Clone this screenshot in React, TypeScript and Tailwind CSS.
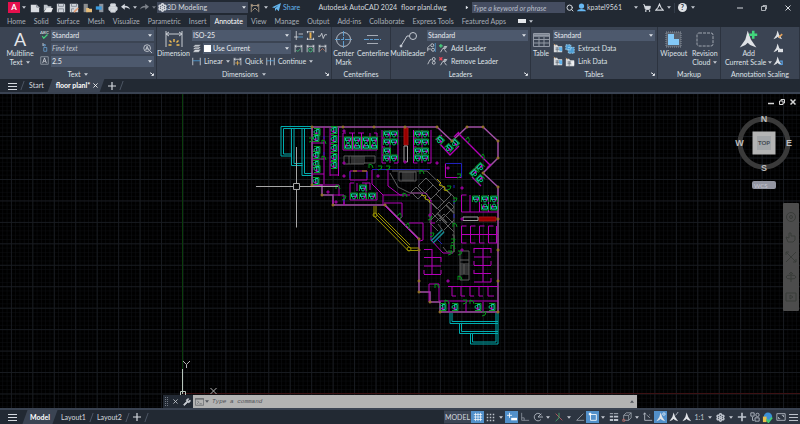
import type { ReactNode } from "react"
import { Printer, Search, Settings, ShoppingCart, Wrench } from "lucide-react"

const tabs = [
  "Home",
  "Solid",
  "Surface",
  "Mesh",
  "Visualize",
  "Parametric",
  "Insert",
  "Annotate",
  "View",
  "Manage",
  "Output",
  "Add-ins",
  "Collaborate",
  "Express Tools",
  "Featured Apps",
]

interface IconProps {
  children: ReactNode
  className?: string
  box?: number
}

function Icon({ children, className = "size-[10px]", box = 12 }: IconProps) {
  return (
    <svg
      viewBox={`0 0 ${box} ${box}`}
      className={`shrink-0 ${className}`}
      fill="none"
      stroke="currentColor"
      aria-hidden="true"
    >
      {children}
    </svg>
  )
}

function Caret({ className = "fill-[#c3c8d0]" }: { className?: string }) {
  return (
    <svg viewBox="0 0 6 4" className={`w-1 h-[3px] shrink-0 ${className}`} aria-hidden="true">
      <path d="M0 0h6L3 4z" />
    </svg>
  )
}

function IconButton({ label, children, className = "" }: { label: string; children: ReactNode; className?: string }) {
  return (
    <button aria-label={label} className={`flex items-center justify-center shrink-0 ${className}`}>
      {children}
    </button>
  )
}

function Combo({ label, value, className = "" }: { label: string; value: string; className?: string }) {
  return (
    <div className={`relative flex h-[11px] min-w-0 flex-1 ${className}`}>
      <select aria-label={label} className="w-full appearance-none bg-[#4d596d] pl-px pr-2 text-[#e6e9ee] outline-none">
        <option>{value}</option>
      </select>
      <Caret className="absolute right-[2px] top-1 fill-[#dfe3e9]" />
    </div>
  )
}

function Panel({ title, caret, launcher, children }: { title: string; caret?: boolean; launcher?: boolean; children: ReactNode }) {
  return (
    <section className="flex min-w-0 flex-col border-r border-[#2c333f]">
      <div className="flex flex-1 gap-1 pt-[3px]">{children}</div>
      <div className="relative flex h-[10px] items-center justify-center gap-1 whitespace-nowrap">
        {title}
        {caret && <Caret />}
        {launcher && (
          <Icon className="absolute right-[2px] top-[3px] size-1" box={4}>
            <path d="M0.5 0.5v1M1 1l2 2M3.5 1.5v2h-2" />
          </Icon>
        )}
      </div>
    </section>
  )
}

function BigButton({ icon, children, className = "" }: { icon: ReactNode; children: ReactNode; className?: string }) {
  return (
    <button className={`flex shrink-0 flex-col items-center whitespace-nowrap text-center leading-[9px] ${className}`}>
      <span className="flex h-[19px] items-center justify-center">{icon}</span>
      <span>{children}</span>
    </button>
  )
}

function TextButton({ icon, children }: { icon: ReactNode; children: ReactNode }) {
  return (
    <button className="flex h-[11px] items-center gap-[3px] whitespace-nowrap">
      {icon}
      {children}
    </button>
  )
}

/* Small dimension glyph: two extension lines with a bar between them */
function DimIcon({ children, className = "size-[10px]" }: { children?: ReactNode; className?: string }) {
  return (
    <Icon className={className}>
      <path d="M1.5 1v10M10.5 1v10M1.5 3h9" />
      <path d="M3.5 1.5L1.5 3l2 1.5M8.5 1.5l2 1.5-2 1.5" strokeWidth="0.8" />
      {children}
    </Icon>
  )
}

function LeaderIcon({ mark }: { mark?: string }) {
  return (
    <Icon className="size-[9px]">
      <path d="M2 11l3-5h2M7 5l4-2M7 7l3 4" />
      <circle cx="8" cy="4.5" r="1.5" />
      {mark === "add" && <path d="M2.5 0v5M0 2.5h5" stroke="#45d27c" strokeWidth="1.6" />}
      {mark === "remove" && <path d="M0.5 0.5l4 4M4.500 0.500l-4 4" stroke="#ef4757" strokeWidth="1.8" />}
    </Icon>
  )
}

function SheetIcon({ accent = "#62b4ed" }: { accent?: string }) {
  return (
    <Icon className="size-[10px]">
      <path d="M1 2h4l1 2h5v7H1z" fill="#d7dade" stroke="none" />
      <path d="M3 6h6M3 8h6M5 5v6" stroke="#59616d" strokeWidth="0.8" />
      <path d="M7 5h4v5H8z" fill={accent} stroke="none" />
      <path d="M1 1l2 2" stroke="#d99c5b" />
    </Icon>
  )
}

function ScaleIcon({ className = "size-[10px]", children }: { className?: string; children?: ReactNode }) {
  return (
    <Icon className={className}>
      <path d="M5.500 0.5L7.500 6 11 11 7 9.500 5.500 8 4 9.500 0.500 11 4 6z" fill="#dfe2e6" stroke="none" />
      {children}
    </Icon>
  )
}

function MenuLines({ className = "w-[9px] h-[8px]" }: { className?: string }) {
  return (
    <svg viewBox="0 0 9 8" className={className} stroke="currentColor" aria-hidden="true">
      <path d="M0 1.500h9M0 4.500h9M0 7.500h9" />
    </svg>
  )
}

function TitleBar() {
  return (
    <header className="flex h-[15px] shrink-0 items-center justify-between text-[#d5d9df]">
      <div className="flex items-center">
        <button aria-label="Application menu" className="ml-2 flex h-[11px] w-3 items-center justify-center bg-[#e5104d] text-[8px] font-bold text-white">
          A
        </button>
        <Caret className="ml-[2px] fill-[#c3c8d0]" />
        <div className="ml-1 flex items-center gap-[3px]">
          <IconButton label="New">
            <Icon><path d="M1 2h7l3 3v6H1z" fill="#d9dce1" stroke="none" /><path d="M8 2v3h3" stroke="#747b86" /></Icon>
          </IconButton>
          <IconButton label="Open">
            <Icon><path d="M1 10V2h4l1 2h4v2H4z" fill="#bfc4cb" stroke="none" /><path d="M1 11l3-5h8l-2 5z" fill="#e6e8eb" stroke="none" /></Icon>
          </IconButton>
          <IconButton label="Save">
            <Icon><path d="M1 1h9l1 1v9H1z" fill="#cfd3d9" stroke="none" /><path d="M3 1v3h6V1M3 11V7h6v4" stroke="#7c838e" /></Icon>
          </IconButton>
          <IconButton label="Save as">
            <Icon><path d="M1 1h9l1 1v9H1z" fill="#cfd3d9" stroke="none" /><path d="M3 1v3h6V1M3 11V7h3" stroke="#7c838e" /><path d="M6 11l5-5" stroke="#e29a70" strokeWidth="2" /></Icon>
          </IconButton>
          <IconButton label="Open from web">
            <Icon><path d="M2 1h5v10H2z" fill="#8c8e90" stroke="none" /><path d="M5 6h3l1 1h3v4H5z" fill="#e6bd7a" stroke="none" /></Icon>
          </IconButton>
          <IconButton label="Save to web">
            <Icon><path d="M5 1h5v10H5z" fill="#8d949e" stroke="none" /><path d="M1 4h7v4H1z" fill="#3c9bdd" stroke="none" /></Icon>
          </IconButton>
          <IconButton label="Plot">
            <Printer className="size-[10px]" fill="#d9dce1" stroke="#c3c8cf" />
          </IconButton>
          <IconButton label="Undo" className="gap-[3px]">
            <Icon className="size-[9px]"><path d="M0 5l5-4v2.5c4 0 6 1.500 7 5-2-2-4-2.500-7-2.500V9z" fill="currentColor" stroke="none" /></Icon>
            <Caret />
          </IconButton>
          <IconButton label="Redo" className="gap-[3px] opacity-50">
            <Icon className="size-[9px]"><path d="M12 5L7 1v2.500c-4 0-6 1.500-7 5 2-2 4-2.500 7-2.500V9z" fill="currentColor" stroke="none" /></Icon>
            <Caret />
          </IconButton>
        </div>
        <div className="relative ml-px flex h-[11px] w-[91px]">
          <select aria-label="Workspace" className="w-full appearance-none bg-[#414a5c] pl-[10px] text-[#d5d9df]">
            <option>3D Modeling</option>
          </select>
          <Settings className="absolute left-px top-px size-[9px]" strokeWidth={4} />
          <Caret className="absolute right-[2px] top-1 fill-[#dfe3e9]" />
        </div>
        <IconButton label="Drafting settings" className="ml-[2px] text-[#b9a58c]">
          <DimIcon><path d="M3 9l3-3 3 3" /></DimIcon>
        </IconButton>
        <IconButton label="Customize" className="ml-1"><Caret /></IconButton>
        <button className="ml-1 flex items-center gap-[2px] text-[#64b5ee]">
          <Icon className="size-[9px]"><path d="M0 5.500L12 0 9 11 6 8 4 11V7l5-4-6 3.500z" fill="currentColor" stroke="none" /></Icon>
          Share
        </button>
      </div>
      <h1 className="flex gap-1 whitespace-nowrap">
        <span>Autodesk AutoCAD 2024</span>
        <span>floor planl.dwg</span>
      </h1>
      <div className="flex items-center">
        <Caret className="mr-[3px] -rotate-90 fill-[#dfe3e9]" />
        <input
          aria-label="Search help"
          placeholder="Type a keyword or phrase"
          className="h-[11px] w-[93px] bg-[#454d61] pl-px italic placeholder:text-[#b9bfca]"
        />
        <IconButton label="Search" className="ml-px"><Search className="size-[8px]" strokeWidth={3} /></IconButton>
        <button className="ml-[3px] flex items-center gap-px">
          <Icon className="size-[9px]"><circle cx="6" cy="4" r="3.500" fill="#67b8f3" stroke="none" /><path d="M0 11c1-4 11-4 12 0z" fill="#67b8f3" stroke="none" /></Icon>
          kpatel9561
        </button>
        <IconButton label="Account menu" className="ml-[12px]"><Caret /></IconButton>
        <IconButton label="App store" className="ml-[5px]"><ShoppingCart className="size-[8px] fill-current" strokeWidth={3} /></IconButton>
        <IconButton label="Autodesk apps" className="ml-1 gap-[3px]">
          <Icon className="size-[9px]"><path d="M1 9.500h10L8 6 6 1.500 4 6z" strokeWidth="1.500" /></Icon>
          <Caret />
        </IconButton>
        <span className="mx-[3px] h-[10px] w-px bg-[#343d4a]" />
        <IconButton label="Help" className="gap-1">
          <span className="flex size-[9px] items-center justify-center rounded-full bg-[#dfe2e6] text-[7px] font-bold text-[#222933]">?</span>
          <Caret />
        </IconButton>
        <div className="ml-[42px] mr-[9px] flex items-center gap-[18px]">
          <IconButton label="Minimize"><Icon className="size-[6px]"><path d="M0 6h12" strokeWidth="2" /></Icon></IconButton>
          <IconButton label="Restore"><Icon className="size-[6px]"><path d="M1 3h8v8H1zM4 3V1h7v7H9" strokeWidth="1.500" /></Icon></IconButton>
          <IconButton label="Close"><Icon className="size-[6px]"><path d="M1 1l10 10M11 1L1 11" strokeWidth="2" /></Icon></IconButton>
        </div>
      </div>
    </header>
  )
}

function RibbonTabs() {
  return (
    <nav className="flex h-3 shrink-0 items-stretch pl-[3px] text-[#a9afb8]">
      {tabs.map((tab) => (
        <button
          key={tab}
          className={
            tab === "Annotate"
              ? "whitespace-nowrap bg-[#3b4453] px-1 text-white"
              : "whitespace-nowrap px-1"
          }
        >
          {tab}
        </button>
      ))}
      <IconButton label="Ribbon display" className="ml-2 gap-[3px]">
        <span className="h-1 w-2 bg-[#e6e8eb]" />
        <Caret />
      </IconButton>
    </nav>
  )
}

function Ribbon() {
  return (
    <div className="grid h-[52px] shrink-0 grid-cols-[157fr_175fr_59fr_140fr_127fr_63fr_79fr] bg-[#3b4453] text-[#dfe2e7]">
      <Panel title="Text" caret launcher>
        <BigButton className="w-9 pl-1" icon={<span className="text-[18px] leading-[17px] text-[#e3e5e9]">A</span>}>
          <span className="block">Multiline</span>
          <span className="flex items-center justify-center gap-1">Text <Caret /></span>
        </BigButton>
        <div className="mr-[2px] flex flex-1 flex-col gap-[2px]">
          <div className="flex gap-[2px]">
            <Icon className="size-[9px]"><text x="0" y="5" fontSize="6" fill="currentColor" stroke="none">ABC</text><path d="M3 8l2 3 5-5" stroke="#42cf7b" strokeWidth="1.600" /></Icon>
            <Combo label="Text style" value="Standard" />
          </div>
          <div className="flex gap-[2px]">
            <Icon className="size-[9px]"><path d="M5 2h2v2H5zM5 6h4v5H5z" stroke="#6aa4d5" /><path d="M4 0v4" /></Icon>
            <div className="relative flex h-[11px] min-w-0 flex-1">
              <input aria-label="Find text" placeholder="Find text" className="w-full bg-[#465063] pl-px italic placeholder:text-[#bfc5ce]" />
              <Icon className="absolute right-[2px] top-px size-[9px]"><circle cx="5.500" cy="5.500" r="4.500" /><path d="M9 9l3 3M3.500 8l2-5 2 5M4 6.500h3" /></Icon>
            </div>
          </div>
          <div className="flex gap-[2px]">
            <Icon className="size-[9px]"><path d="M1 1h10v10H1z" stroke="#9ea5b0" /><path d="M3.500 9.500l2.500-7 2.500 7M4.500 7h3" /></Icon>
            <Combo label="Text height" value="2.5" />
          </div>
        </div>
      </Panel>

      <Panel title="Dimensions" caret launcher>
        <BigButton
          className="w-[31px] pl-[2px]"
          icon={
            <svg viewBox="0 0 18 17" className="h-[17px] w-[18px]" fill="none" stroke="#c9cdd4" aria-hidden="true">
              <path d="M1 0v16M17 0v16M1 3h16M4 1L1 3l3 2M14 1l3 2-3 2" />
              <path d="M9 8v3M4.500 9.500l2 2M13.500 9.500l-2 2M3.500 14h3M11.500 14h3" stroke="#f0bd55" strokeWidth="1.400" />
            </svg>
          }
        >
          <span className="block">Dimension</span>
        </BigButton>
        <div className="flex min-w-0 flex-1 flex-col gap-[2px]">
          <div className="flex items-center gap-[3px] pr-1">
            <Combo label="Dimension style" value="ISO-25" />
            <Icon className="size-[9px]"><path d="M3 0v12M0 8h6M6 4h6" /><path d="M6 8h6" stroke="#4da3e0" /></Icon>
            <Icon className="size-[9px]"><path d="M1 1h10M1 11h10M2 0v3M10 0v3M2 9v3M10 9v3" /><path d="M6 2v8" stroke="#eab14e" strokeWidth="2.500" /></Icon>
            <Icon className="size-[9px]"><path d="M0 7h3l2-4 2 7 2-5h3" /></Icon>
          </div>
          <div className="flex items-center gap-[3px] pr-1">
            <div className="relative flex h-[11px] min-w-0 flex-1 items-center gap-[2px]">
              <Icon className="size-[9px]"><path d="M4 1h8l-3 3H1zM4 4h8L9 7H1zM4 7h8l-3 4H1z" fill="#d6d9de" stroke="#3b4453" strokeWidth="0.700" /></Icon>
              <Combo label="Dimension layer" value="Use Current" className="[&>select]:pl-[10px]" />
              <span className="absolute left-3 top-[2px] size-[7px] bg-white" />
            </div>
            <DimIcon className="size-[9px]"><path d="M3 8l2 2 4-4" stroke="#42cf7b" /></DimIcon>
            <DimIcon className="size-[9px]"><circle cx="6" cy="8" r="2.500" stroke="#42cf7b" /></DimIcon>
            <DimIcon className="size-[9px]"><path d="M3 9l3-3 3 3" stroke="#bf7862" /></DimIcon>
          </div>
          <div className="flex items-center gap-[3px]">
            <TextButton icon={<Icon className="size-[9px]"><path d="M1 1v10M11 1v10" /><path d="M1 5h10" stroke="#4da3e0" /></Icon>}>Linear</TextButton>
            <Caret />
            <TextButton icon={<DimIcon className="size-[9px]"><path d="M6 5v6M3 8h6" stroke="#eab14e" /></DimIcon>}>Quick</TextButton>
            <TextButton icon={<Icon className="size-[9px]"><path d="M1 1v10M6 1v10M11 1v10" /><path d="M1 5h10" stroke="#4da3e0" /></Icon>}>Continue</TextButton>
            <Caret />
          </div>
        </div>
      </Panel>

      <Panel title="Centerlines">
        <div className="flex w-full justify-center gap-[3px]">
          <BigButton
            icon={
              <svg viewBox="0 0 17 17" className="size-[17px]" fill="none" stroke="#b9bec7" aria-hidden="true">
                <circle cx="8.500" cy="8.500" r="7" />
                <path d="M8.500 0v17M0 8.500h17" stroke="#5d9ccd" strokeDasharray="5 1 3 1" />
              </svg>
            }
          >
            <span className="block">Center</span>Mark
          </BigButton>
          <BigButton
            icon={
              <svg viewBox="0 0 17 17" className="size-[17px]" fill="none" stroke="#a5abb5" aria-hidden="true">
                <path d="M3 4.500h11M3 12.500h11" />
                <path d="M0 8.500h17" stroke="#5d9ccd" strokeDasharray="5 1 3 1" />
              </svg>
            }
          >
            <span className="block">Centerline</span>
          </BigButton>
        </div>
      </Panel>

      <Panel title="Leaders" launcher>
        <BigButton
          className="w-8 pl-[2px]"
          icon={
            <svg viewBox="0 0 18 17" className="h-[17px] w-[18px]" fill="none" stroke="#c4c9d1" aria-hidden="true">
              <circle cx="14" cy="5" r="3.500" />
              <path d="M2 15L8 5h2.500" />
              <circle cx="2" cy="15" r="1" fill="#e6e8eb" />
            </svg>
          }
        >
          <span className="block">Multileader</span>
        </BigButton>
        <div className="flex min-w-0 flex-1 flex-col gap-[2px] pr-[2px]">
          <div className="flex"><Combo label="Leader style" value="Standard" /></div>
          <div className="flex gap-[3px]">
            <Icon className="size-[9px]"><path d="M1 11V6l3-3M1 8h4" /><circle cx="7" cy="3" r="2" /><circle cx="8" cy="9" r="2" /><path d="M11 0v12" stroke="#4da3e0" /></Icon>
            <TextButton icon={<LeaderIcon mark="add" />}>Add Leader</TextButton>
          </div>
          <div className="flex gap-[3px]">
            <Icon className="size-[9px]"><path d="M1 11l3-6h2" /><circle cx="9" cy="4" r="2" /><circle cx="9" cy="9" r="2" /></Icon>
            <TextButton icon={<LeaderIcon mark="remove" />}>Remove Leader</TextButton>
          </div>
        </div>
      </Panel>

      <Panel title="Tables" launcher>
        <BigButton
          className="w-[18px] pl-[2px]"
          icon={
            <svg viewBox="0 0 17 16" className="h-[16px] w-[17px]" fill="none" stroke="#9299a5" aria-hidden="true">
              <path d="M0.500 1.500h16v13h-16zM0.500 7.500h16M0.500 11h16M6 5v10M11 5v10" />
              <path d="M0 3.500h17" strokeWidth="2.500" />
            </svg>
          }
        >
          <span className="block">Table</span>
        </BigButton>
        <div className="flex min-w-0 flex-1 flex-col gap-[2px] pr-[2px]">
          <div className="flex"><Combo label="Table style" value="Standard" /></div>
          <div className="flex gap-[2px]">
            <SheetIcon />
            <TextButton icon={<Icon className="size-[10px]"><path d="M1 1h6v6H1zM4 4h7v7H4z" fill="#4c9bd2" stroke="#a6d8f5" strokeDasharray="2 1" /></Icon>}>Extract Data</TextButton>
          </div>
          <div className="flex gap-[2px]">
            <SheetIcon />
            <TextButton icon={<SheetIcon accent="#f0f1f3" />}>Link Data</TextButton>
          </div>
        </div>
      </Panel>

      <Panel title="Markup">
        <div className="flex w-full justify-around">
          <BigButton
            icon={
              <svg viewBox="0 0 17 17" className="size-[17px]" aria-hidden="true">
                <path d="M1 1h15v15H1z" fill="#59616d" stroke="#8b929d" strokeDasharray="1 1" />
                <path d="M3 3h6v5h5v6H3z" fill="#83c9f8" />
              </svg>
            }
          >
            <span className="block">Wipeout</span>
          </BigButton>
          <BigButton
            icon={
              <svg viewBox="0 0 18 15" className="h-[15px] w-[18px]" fill="none" stroke="#a0a6b0" aria-hidden="true">
                <rect x="1" y="1" width="16" height="13" rx="2" strokeDasharray="3 1" />
              </svg>
            }
          >
            <span className="block">Revision</span>
            <span className="flex items-center justify-center gap-[3px]">Cloud <Caret /></span>
          </BigButton>
        </div>
      </Panel>

      <Panel title="Annotation Scaling">
        <div className="flex gap-px pl-1">
          <BigButton
            icon={
              <ScaleIcon className="size-[19px]">
                <path d="M9 0.500v5M6.500 3h5" stroke="#42d67c" strokeWidth="1.600" />
              </ScaleIcon>
            }
          >
            <span className="block">Add</span>
            <span className="flex items-center gap-[2px]">Current Scale <Caret /></span>
          </BigButton>
          <div className="flex flex-col gap-[3px]">
            <ScaleIcon><path d="M7 9l4-4" stroke="#e6a35a" strokeWidth="2" /></ScaleIcon>
            <ScaleIcon><path d="M6 7h6v4H6z" fill="#dcdfe3" stroke="none" /></ScaleIcon>
            <ScaleIcon><path d="M8 6h3v4H8" stroke="#5a9fe0" strokeWidth="1.500" /></ScaleIcon>
          </div>
        </div>
      </Panel>
    </div>
  )
}

function DocumentTabs() {
  return (
    <nav className="flex h-[15px] shrink-0 items-center border-b-2 border-[#3a4352] pl-2 text-[#d5d9df]">
      <IconButton label="Document menu"><MenuLines /></IconButton>
      <Slash />
      <button className="pl-px">Start</button>
      <button className="relative ml-[6px] flex h-full items-center gap-[3px] pl-[6px] pr-1 font-bold text-white">
        <span className="absolute inset-0 -skew-x-[20deg] bg-[#3b4453]" />
        <span className="relative">floor planl*</span>
        <Icon className="relative size-[5px]"><path d="M1 1l10 10M11 1L1 11" strokeWidth="2" /></Icon>
      </button>
      <IconButton label="New drawing" className="ml-[6px]"><Icon className="size-[8px]"><path d="M6 0v12M0 6h12" strokeWidth="1.800" /></Icon></IconButton>
      <Slash />
    </nav>
  )
}

function Slash() {
  return <span className="mx-[5px] h-[9px] w-px shrink-0 skew-x-[-20deg] bg-[#4c5564]" />
}

/* Workstation: [x, y, rotation] */
const desks = [
  [317, 132, 90], [316, 138, 90], [317, 150, 90], [316, 155, 90], [316, 164, 90], [317, 169, 90], [316, 181, 90],
  [334, 130, 90], [334, 139, 90], [334, 148, 90], [334, 157, 90], [334, 165, 90],
  [348, 140, 0], [357, 140, 0], [366, 140, 0], [374, 140, 0],
  [348, 146, 180], [357, 146, 180], [366, 146, 180], [374, 146, 180],
  [387, 134, 0], [394, 134, 0], [387, 142, 0], [394, 142, 0], [387, 151, 0], [387, 158, 0], [394, 158, 0],
  [418, 134, 0], [425, 134, 0], [418, 142, 0], [425, 142, 0], [418, 151, 0], [425, 151, 0], [418, 158, 0], [425, 158, 0],
  [440, 140, 45], [449, 148, 45], [455, 143, 45], [480, 167, -45], [474, 173, -45], [480, 179, -45],
  [354, 196, 0], [363, 188, 0], [363, 196, 0], [372, 196, 0],
  [476, 199, 0], [485, 199, 0], [494, 199, 0], [485, 207, 180], [494, 207, 180],
  [443, 307, 90], [455, 307, 90], [478, 307, 90], [492, 307, 90],
]

/* Structural columns on the outer wall */
const columns = [
  [312, 127], [343, 127], [374, 127], [405, 127], [437, 127], [452, 141], [467, 127], [483, 127], [498, 141], [498, 158],
  [483, 173], [498, 187], [498, 219], [498, 250], [498, 281], [498, 312], [440, 312], [430, 302], [419, 292],
  [419, 281], [419, 250], [419, 239], [385, 205], [333, 205], [322, 195], [312, 185],
]

const posts = [
  [344, 163], [344, 176], [328, 192], [336, 202], [378, 176], [405, 162], [437, 163], [448, 168], [462, 188],
  [462, 219], [462, 250], [448, 281], [344, 131], [430, 215],
]

/* Doors: [x, y, rotation] */
const doors = [
  [324, 142, 0], [324, 158, 0], [311, 140, 90], [371, 166, 0], [380, 168, 90], [388, 168, 90], [338, 187, 0],
  [344, 198, 90], [400, 216, 45], [408, 226, 45], [422, 172, 0], [405, 195, 0], [455, 200, 90], [455, 225, 0],
  [460, 253, 90], [437, 286, 0], [453, 241, 90], [453, 247, 0], [430, 218, 90], [432, 235, 90], [468, 140, 45],
  [483, 157, 45], [447, 302, 0], [465, 302, 90], [472, 302, 0], [484, 314, 90], [459, 176, 90], [449, 188, 90],
  [460, 278, 0], [450, 253, 90],
]

function FloorPlan() {
  return (
    <g fill="none" strokeWidth="1">
      {/* Balconies */}
      <g stroke="#00acae">
        <path d="M312 126.500H281v29.500h11M312 128.500H283.500v25.500H292M291.500 128v37.500h11M294 128v35.500h8.500M302 128v47.500h10M304.500 128v45.500h7.500" />
        <path d="M450 313v10.500h48M452 313v8.500h46M459.500 323v10.500h38.500M461.500 323v8.500h36.500M470.500 333v11h27.500v-31M472.500 333v9h23.500v-29" />
      </g>
      {/* Outer wall */}
      <path
        d="M312 127H437L452 141 467 127H483L498 141V158L483 173 498 187V312H440V302H430V292H419V239L385 205H333V195H322V185H312z"
        stroke="#a04fa4"
        strokeWidth="1.500"
      />
      <path d="M376 206v8L410 248h9M374 206v10L408 250.500h11M378 213l32 32" stroke="#9a9200" />
      <circle cx="375" cy="215" r="2" stroke="#9a9200" />
      <circle cx="409" cy="249" r="2" stroke="#9a9200" />

      {/* Interior walls */}
      <g stroke="#b400b8">
        <path d="M324 127v57M312 143h12M312 159h12M312 174h12M330 128v48M338.500 128v48M330 134h4M330 144h4M330 153h4M330 162h4M330 175h8" />
        <path d="M343 133v17M352.500 133v17M361.500 133v17M370 133v17M377 133v17M343 133h3M349 133h6M358 133h6M374 133h3M343 150h34" />
        <path d="M382 130v33M398 130v33M382 138h3M382 147h3M382 155h3M382 163h4M394 163h4M390 130v33" />
        <path d="M413.500 130v33M422 130v33M431 130v33M413.500 138h3M413.500 147h3M413.500 155h3M413.500 163h4M427 163h4" />
        <path d="M350 171h17v9h-17zM350 183v17h27M357 183v8M366 183v17M350 183h4M362 183h8v7M377 192v8" />
        <path d="M312 185h27v11M333 205v-5M333 195h11v10M344 205v-6" />
        <path d="M372 170v14l11 11h20M388 170v16l12 9h10M383 195v10" />
        <path d="M384 203h18v14l-3 2M409 223h14v17l-3 1M385 206l34 34" />
        <path d="M458 133l32 32M454 137l5-5M487 168l4-4M440 144l10 11 9-9M436 140l6-5M472 177l9 9M470 174l8-8" strokeWidth="1.400" />
        <path d="M445.500 163.500v14h16M461.500 195v17h36M470 195v17M479.500 195v17M488.500 195v17M461.500 195h5" />
        <path d="M461.500 226v17M470.500 226v17M479.500 226v17M488.500 226v17M496.500 226v17M461.500 234.500H498M461.500 226h5M470.500 226h5M479.500 226h5M488.500 226h5M461.500 243h5M470.500 243h5M479.500 243h5M488.500 243h9" />
        <path d="M483 248v34M474 248.500h17M474 257h17M474 265.500h17M474 273.500h17M474 282h17M474 248v5M474 261v4M474 270v4M491 248v5M491 261v4M491 278v4" />
        <path d="M432 249v26M424 249.500h8M424 257.500h17M424 266h17M424 274.500h17M424 270v4M441 257v5M441 270v4" />
        <path d="M448 286.500h50M452 287v9M461 287v9M470 287v9M479 287v9M488 287v9M452 296h4M461 296h4M470 296h4M479 296h4M488 296h6" />
        <path d="M429 302v-18h10v17h59M449 302v10M466 302v10M483 302v10" />
        <path d="M431 200v40l12 13h10M410 193h16l5 8M431 223h4" />
      </g>

      {/* Service core */}
      <g stroke="#5e5e5e">
        <path d="M344 156h20v8h-20zM364 156h11v7h-11M349 156v8M352 156v8M354 156v8M356 156v8M358 156v8M360 156v8M362 156v8" />
        <path d="M392 171h35l27 26v55M390 173l8 14 12 6h10l10 10v20l8 8M399 172h17v9h-17zM403 172v9M405 172v9M407 172v9M409 172v9M411 172v9M413 172v9" />
        <path d="M426 178l7 7-8 8-7-7zM433 185l6 6-8 8-6-6M416 187l7 7-5 5-7-7zM443 187l8 8-7 7-8-8zM436 194l8 8-7 7-8-8zM432 203l8 8 9-9M440 211l-9 9M449 202l5 5-14 14-8-8M436 222l8-8 10 10M440 218l14 14M444 230l10-10M438 224l6 8M452 235h2v17h-7l-4-5" />
        <path d="M446 205l8 8M437 213l10 10" strokeWidth="1.500" />
        <path d="M460 251h9v29h-9zM460 260h9M460 264h9M460 266h9M460 268h9M460 270h9M460 272h9M460 274h9M464 264v10" />
      </g>
      <path d="M433 243l11-11M431 241l11-11" stroke="#168c94" strokeWidth="1.500" />
      <path d="M372 169.500h58M446 163.500h15.500v14M350 172v6M367 172v6M324 136v3M324 152v3M344 198v4M437 239l5 5M454 200v4M454 214v4M454 185v3" stroke="#2020bc" />
      <path d="M437 179l4 4-2 2 6 2-1 3 4 1M421 195l5 1-1 3 4 1 1 3M353 171h4M362 171h5" stroke="#aaa000" />
      <path d="M404 128h4v17h-4zM479 217h17v4h-17z" fill="#980000" stroke="#a61212" />
      <path d="M404 146h3.500v16H404zM463 217h15v3.500H463z" stroke="#a0a0a0" />

      {doors.map(([x, y, turn], i) => (
        <path key={i} d="M-2 2V-2A4 4 0 0 1 2 2" stroke="#009416" transform={`translate(${x} ${y}) rotate(${turn})`} />
      ))}
      {desks.map(([x, y, turn], i) => (
        <g key={i} transform={`translate(${x} ${y}) rotate(${turn})`}>
          <path d="M-3.500 3v-6h7v6M-3.500 0H-1" stroke="#089a24" />
          <path d="M-2.500 -2H2.500V0.500H-2.500z" stroke="#14c4ac" />
          <circle cy="1.500" r="1.500" stroke="#00c070" />
          <path d="M0.500 -0.500h2v2h-2z" fill="#d000d0" />
        </g>
      ))}
      {posts.map(([x, y], i) => (
        <path key={i} d="M-1 -1H1V1H-1z" fill="#8e0091" stroke="#8e0091" transform={`translate(${x} ${y})`} />
      ))}
      {columns.map(([x, y], i) => (
        <path key={i} d="M-1 -1H1V1H-1z" fill="#80652d" stroke="#9f7d28" strokeWidth="0.600" transform={`translate(${x} ${y})`} />
      ))}
    </g>
  )
}

function ViewCube() {
  return (
    <div className="absolute right-[7px] top-5 flex flex-col items-center gap-[7px]">
      <svg viewBox="0 0 58 60" className="h-[60px] w-[58px]" aria-label="View cube">
        <circle cx="29" cy="29" r="24" fill="none" stroke="#3a3a3a" strokeWidth="5" />
        <path d="M17.500 17.500h23v23h-23z" fill="#b4b4b4" />
        <path d="M22 22h14v14H22z" fill="#a3a6a9" />
        <text x="29" y="31" textAnchor="middle" fontSize="6" fontWeight="bold" fill="#41474f">TOP</text>
        <g fill="#bdbdbd" fontSize="9" fontWeight="bold" textAnchor="middle" fontFamily="Liberation Sans, sans-serif">
          <text x="29" y="8">N</text>
          <text x="29" y="57">S</text>
          <text x="4.500" y="32">W</text>
          <text x="54" y="32">E</text>
        </g>
      </svg>
      <button className="flex h-2 w-6 items-center rounded-[2px] bg-[#9395a1] pl-[2px] text-[6px] text-[#c6c7d0]">WCS</button>
    </div>
  )
}

function Canvas() {
  return (
    <main className="relative min-h-0 flex-1 overflow-hidden bg-black">
      <svg viewBox="0 94 800 314" preserveAspectRatio="xMidYMid slice" className="absolute inset-0 size-full" aria-label="Drawing area">
        <defs>
          <pattern id="minor" width="4.290" height="4.290" x="182.500" y="393.500" patternUnits="userSpaceOnUse">
            <path d="M0 0H4.290M0 0V4.290" stroke="#0e1014" strokeWidth="1" fill="none" />
          </pattern>
          <pattern id="major" width="21.450" height="21.450" x="182.500" y="393.500" patternUnits="userSpaceOnUse">
            <path d="M0 0.500H21.450M0.500 0V21.450" stroke="#191c22" strokeWidth="0.900" fill="none" />
          </pattern>
        </defs>
        <path d="M0 94h800v314H0z" fill="url(#minor)" />
        <path d="M0 94h800v314H0z" fill="url(#major)" />
        <path d="M182.500 94v275" stroke="#0a3d0c" />
        <path d="M183 393.500h617" stroke="#3c1113" />
        <FloorPlan />
        <path d="M256 186.500h38M300 186.500h38M296.500 147v36.500M296.500 189.500v38M293.500 183.500h6v6h-6z" fill="none" stroke="#a6a6a6" />
        <path d="M182.500 369v25M180.500 391.500h5v5h-5z" fill="none" stroke="#b7c4b9" />
        <path d="M183 361l3.500 3.500L190 361M186.500 364.500v3.500M210.500 388l6 6M216.500 388l-6 6" fill="none" stroke="#b4b4b4" />
      </svg>

      <div className="absolute right-1 top-[5px] flex gap-[5px] text-[#d6d6d6]">
        <IconButton label="Minimize drawing"><Icon className="size-[6px]"><path d="M0 9h12" strokeWidth="3" /></Icon></IconButton>
        <IconButton label="Restore drawing"><Icon className="size-[6px]"><path d="M1 4h7v7H1zM4 4V1h7v7H8" strokeWidth="2" /></Icon></IconButton>
        <IconButton label="Close drawing"><Icon className="size-[6px]"><path d="M1 1l10 10M11 1L1 11" strokeWidth="3" /></Icon></IconButton>
      </div>

      <ViewCube />

      <div className="absolute right-px top-[109px] flex w-4 flex-col items-center justify-around gap-2 rounded-[1px] bg-[#4c4c4c] py-2 text-[#393c39]">
        <IconButton label="Steering wheel"><Icon className="size-3"><circle cx="6" cy="6" r="4.500" /><circle cx="6" cy="6" r="1.500" /></Icon></IconButton>
        <IconButton label="Pan"><Icon className="size-3"><path d="M3 11L1 6l3 1V2h2v3h4v4l-2 2z" /></Icon></IconButton>
        <IconButton label="Zoom extents"><Icon className="size-3"><path d="M1 1l10 10M11 1L1 11M1 4V1h3M8 11h3V8" /></Icon></IconButton>
        <IconButton label="Orbit"><Icon className="size-3"><ellipse cx="6" cy="6" rx="5" ry="2" /><path d="M6 1v10M4 3l2-2 2 2" /></Icon></IconButton>
        <IconButton label="Show motion"><Icon className="size-3"><path d="M1 2h10v8H1zM5 4l3 2-3 2z" /></Icon></IconButton>
      </div>

      <div className="absolute inset-x-[163px] bottom-0 flex h-[13px] bg-[#b3b3b3]">
        <div className="flex w-[30px] items-center justify-between bg-[#222933] px-[2px] text-[#c7cbd1]">
          <svg viewBox="0 0 3 9" className="h-[9px] w-[3px]" stroke="#737a85" aria-hidden="true">
            <path d="M0.500 0v9M2.500 0v9" strokeDasharray="1 1" />
          </svg>
          <IconButton label="Close command line"><Icon className="size-[5px]"><path d="M1 1l10 10M11 1L1 11" strokeWidth="2" /></Icon></IconButton>
          <IconButton label="Customize command line"><Wrench className="size-[8px] fill-current" /></IconButton>
        </div>
        <IconButton label="Recent commands" className="gap-px px-[2px] text-[#606468]">
          <Icon className="size-[9px]"><path d="M0.500 2h11v9h-11zM0 3h12M3 5l2 2-2 2M6 9h3" /></Icon>
          <Caret className="fill-[#50555b]" />
        </IconButton>
        <input
          aria-label="Command"
          placeholder="Type a command"
          className="min-w-0 flex-1 pl-px font-['Liberation_Mono',monospace] text-[6px] italic outline-none placeholder:text-[#4f5256]"
        />
        <IconButton label="Command history" className="px-[3px]"><Caret className="rotate-180 fill-[#50555b]" /></IconButton>
      </div>
    </main>
  )
}

function StatusItem({ label, active, caret, children }: { label: string; active?: boolean; caret?: boolean; children: ReactNode }) {
  return (
    <div className="flex h-full items-center">
      <button
        aria-label={label}
        className={`flex h-3 w-[13px] items-center justify-center ${active ? "bg-[#5290ca] text-white" : "text-[#bcc2cb]"}`}
      >
        {children}
      </button>
      {caret && <button aria-label={`${label} options`} className="flex h-3 w-2 items-center justify-center"><Caret /></button>}
    </div>
  )
}

function StatusBar() {
  return (
    <footer className="flex h-4 shrink-0 items-center border-t-2 border-[#3a4352] text-[#d5d9df]">
      <nav className="flex h-full flex-1 items-center pl-2">
        <IconButton label="Layout menu"><MenuLines /></IconButton>
        <button className="relative ml-2 flex h-full items-center px-[5px] font-bold text-white">
          <span className="absolute inset-0 -skew-x-[20deg] bg-[#3b4453]" />
          <span className="relative">Model</span>
        </button>
        <button className="ml-[6px]">Layout1</button>
        <Slash />
        <button>Layout2</button>
        <Slash />
        <IconButton label="New layout"><Icon className="size-[8px]"><path d="M6 0v12M0 6h12" strokeWidth="1.800" /></Icon></IconButton>
        <Slash />
      </nav>
      <div className="flex h-full items-center bg-[#2d3541]">
        <button className="h-3 w-[27px] bg-[#3b4453] text-center">MODEL</button>
        <div className="flex h-full items-center">
          <StatusItem label="Grid" active><Icon><path d="M3 1v10M6 1v10M9 1v10M1 3h10M1 6h10M1 9h10" strokeWidth="0.800" /></Icon></StatusItem>
          <StatusItem label="Snap" caret><Icon className="size-[9px]"><path d="M1 2h10M1 6h10M1 10h10" strokeWidth="2" strokeDasharray="2 2" /></Icon></StatusItem>
          <StatusItem label="Dynamic input" active><Icon><path d="M3 1v6M0 4h6" /><path d="M5 7h7v3H5z" fill="currentColor" stroke="none" /></Icon></StatusItem>
          <StatusItem label="Ortho"><Icon><path d="M2 1v9h9M2 7h3v3" stroke="#8b929d" /></Icon></StatusItem>
          <StatusItem label="Polar tracking" caret><Icon><path d="M9.500 9A4.500 4.500 0 1 1 10 4M6 6h6M6 6l4-4" /></Icon></StatusItem>
          <StatusItem label="Isometric drafting" caret><Icon><path d="M2 2l8 8" stroke="#c65a62" /><path d="M6 1v6l-4 4" stroke="#49ad70" /></Icon></StatusItem>
          <StatusItem label="Object tracking"><Icon><path d="M10 2L2 10h9" stroke="#9aa1ab" /></Icon></StatusItem>
          <StatusItem label="Object snap" active caret><Icon><path d="M3 3h7v7H3z" /><path d="M1.500 1.500h2v2h-2z" fill="currentColor" /></Icon></StatusItem>
          <StatusItem label="Lineweight"><Icon><path d="M1 2h4M6 2h5" /><path d="M1 5.500h4M6 5.500h5" strokeWidth="2" /><path d="M1 9.500h4M6 9.500h5" strokeWidth="2.500" /></Icon></StatusItem>
          <StatusItem label="3D object snap" caret><Icon><path d="M2 4h6v6H2zM2 4l3-3h6v6l-3 3M8 4l3-3" stroke="#9aa1ab" /><circle cx="2" cy="10" r="1.500" stroke="#bd625c" /></Icon></StatusItem>
          <StatusItem label="Dynamic UCS"><Icon><path d="M2 1v9h9M0.500 3L2 1l1.500 2M5 4l3 3M8 3v1" /></Icon></StatusItem>
          <StatusItem label="Annotation visibility" active><ScaleIcon><circle cx="9.500" cy="2.500" r="1.500" strokeWidth="0.800" /></ScaleIcon></StatusItem>
          <StatusItem label="Auto scale"><ScaleIcon><path d="M8 4l3-4" /></ScaleIcon></StatusItem>
          <StatusItem label="Annotation scale"><ScaleIcon /></StatusItem>
          <StatusItem label="Scale ratio" caret><span>1:1</span></StatusItem>
          <StatusItem label="Workspace switching" caret><Settings className="size-[9px]" strokeWidth={4} /></StatusItem>
          <StatusItem label="Annotation monitor"><Icon><path d="M6 1v10M1 6h10" strokeWidth="2" /></Icon></StatusItem>
          <StatusItem label="Isolate objects"><Icon><path d="M1 1h4v4H1zM6 7h5v4H6z" /><circle cx="9" cy="3.500" r="2" /><path d="M3 6v4h2" /></Icon></StatusItem>
          <StatusItem label="Graphics performance"><Icon className="size-[11px]"><circle cx="6.500" cy="5" r="4.500" fill="#3b90d4" stroke="none" /><path d="M1 5h4v6H1z" fill="#e7c04a" stroke="none" /><path d="M5 8l2 3 4-5" stroke="#43cd74" strokeWidth="2" /></Icon></StatusItem>
          <StatusItem label="Clean screen"><Icon><path d="M1 2h10v8H1zM7 4h2v2M5 8H3V6" /></Icon></StatusItem>
          <StatusItem label="Customization"><MenuLines /></StatusItem>
        </div>
      </div>
    </footer>
  )
}

export default function App() {
  return (
    <div className="flex h-screen flex-col overflow-hidden bg-[#222933] font-['Lato','Open_Sans',sans-serif] text-[7px] leading-[9px]">
      <TitleBar />
      <RibbonTabs />
      <Ribbon />
      <DocumentTabs />
      <Canvas />
      <StatusBar />
    </div>
  )
}
